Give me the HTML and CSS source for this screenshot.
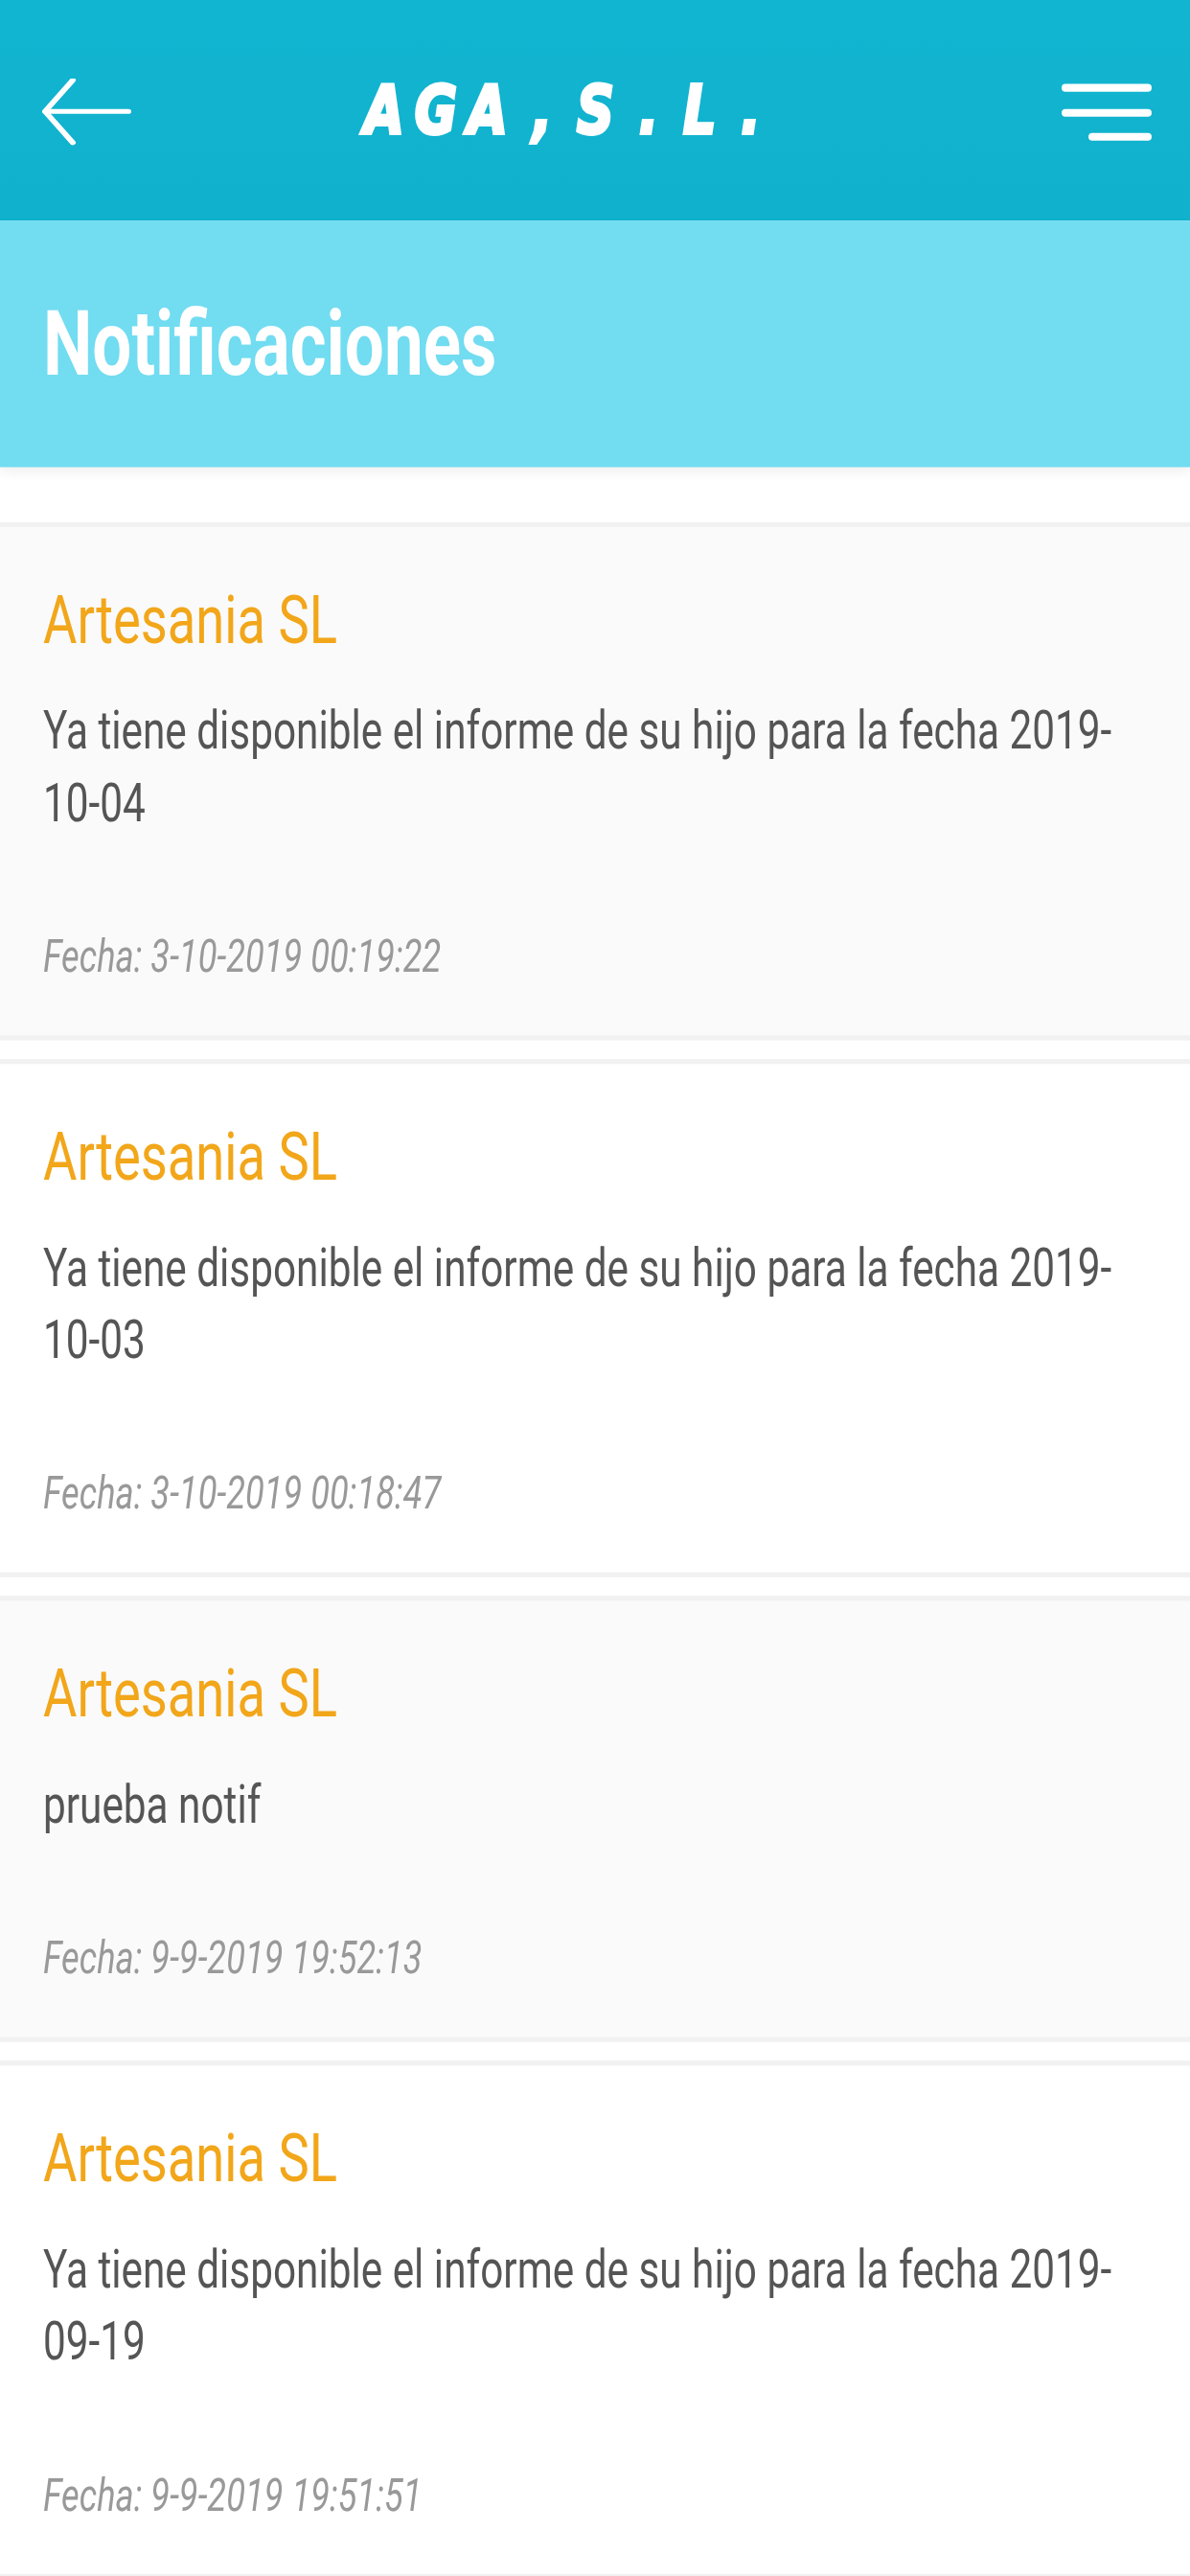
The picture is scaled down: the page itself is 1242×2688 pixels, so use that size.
FILE: index.html
```html
<!DOCTYPE html>
<html lang="es">
<head>
<meta charset="utf-8">
<title>Notificaciones</title>
<link rel="stylesheet" href="styles.css">
</head>
<body>
<div class="screen">
  <header class="topbar">
    <svg class="icon-back" viewBox="0 0 100 100" preserveAspectRatio="none" aria-hidden="true">
      <path d="M32 2 L3 40 L32 78 M3 40 H90" fill="none" stroke="#fff" stroke-width="6" stroke-linecap="round" stroke-linejoin="round"/>
    </svg>
    <div class="logo">AGA , S . L .</div>
    <svg class="icon-menu" viewBox="0 0 100 70" preserveAspectRatio="none" aria-hidden="true">
      <path d="M8 11 H94 M8 37 H94 M36 62 H94" fill="none" stroke="#fff" stroke-width="8" stroke-linecap="round"/>
    </svg>
  </header>
  <div class="band"><h1 class="band-title">Notificaciones</h1></div>
  <main class="list">
    <article class="card card-alt">
      <h2 class="card-title">Artesania SL</h2>
      <p class="card-body">Ya tiene disponible el informe de su hijo para la fecha 2019-10-04</p>
      <p class="card-date">Fecha: 3-10-2019 00:19:22</p>
    </article>
    <article class="card">
      <h2 class="card-title">Artesania SL</h2>
      <p class="card-body">Ya tiene disponible el informe de su hijo para la fecha 2019-10-03</p>
      <p class="card-date">Fecha: 3-10-2019 00:18:47</p>
    </article>
    <article class="card card-alt">
      <h2 class="card-title">Artesania SL</h2>
      <p class="card-body">prueba notif</p>
      <p class="card-date">Fecha: 9-9-2019 19:52:13</p>
    </article>
    <article class="card">
      <h2 class="card-title">Artesania SL</h2>
      <p class="card-body">Ya tiene disponible el informe de su hijo para la fecha 2019-09-19</p>
      <p class="card-date">Fecha: 9-9-2019 19:51:51</p>
    </article>
  </main>
</div>
</body>
</html>
```
FILE: styles.css
```css
html, body { margin: 0; padding: 0; background: #fff; height: 2688px; }
.screen {
  width: 1242px;
  height: 2068px;
  transform: scaleY(1.3);
  transform-origin: top left;
  font-family: Roboto, "Liberation Sans", sans-serif;
}
.topbar {
  height: 177px;
  background: linear-gradient(#12b5d1, #10b1cd);
  display: flex;
  align-items: center;
  padding: 0 38px 0 44px;
  box-sizing: border-box;
}
.icon-back { width: 100px; height: 66px; flex: none; margin-top: 15px; }
.icon-menu { width: 100px; height: 54px; flex: none; margin-left: auto; margin-top: 1px; }
.logo {
  margin-left: 236px;
  font-family: "DejaVu Sans", sans-serif;
  font-weight: 700;
  font-style: italic;
  font-size: 54px;
  line-height: 1;
  letter-spacing: 11px;
  word-spacing: -15px;
  color: #fff;
  white-space: nowrap;
  -webkit-text-stroke: 3px #fff;
}
.band {
  height: 198px;
  background: #72dcf1;
  display: flex;
  align-items: center;
  padding: 0 45px;
  box-sizing: border-box;
  box-shadow: 0 4px 10px rgba(0,0,0,.06);
  position: relative;
}
.band-title { margin: 0; font-size: 72.8px; font-weight: 700; color: #fff; line-height: 1; }
.list { padding-top: 44px; display: flex; flex-direction: column; gap: 15px; }
.card {
  border-top: 4px solid #f1f1f1;
  border-bottom: 4px solid #f1f1f1;
  padding: 40px 45px 0;
  height: 416px;
  box-sizing: border-box;
  background: #fff;
  flex: none;
}
.card:nth-child(3) { height: 358px; }
.card-alt { background: #fafafa; }
.card-title { margin: 0; font-size: 54.3px; font-weight: 400; color: #f2a61a; line-height: 70px; }
.card-body { margin: 25px 0 0; font-size: 42.3px; color: #555; line-height: 58px; }
.card-date { margin: 71px 0 0; font-size: 36.3px; font-style: italic; color: #999; line-height: 46px; }
```
